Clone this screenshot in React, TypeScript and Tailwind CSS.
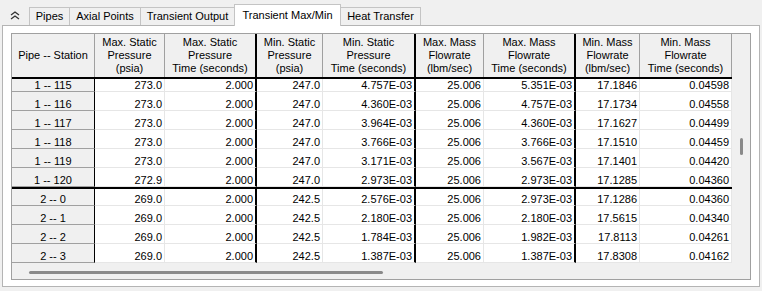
import React from "react";

const headers: string[][] = [
  ["Pipe -- Station"],
  ["Max. Static", "Pressure", "(psia)"],
  ["Max. Static", "Pressure", "Time (seconds)"],
  ["Min. Static", "Pressure", "(psia)"],
  ["Min. Static", "Pressure", "Time (seconds)"],
  ["Max. Mass", "Flowrate", "(lbm/sec)"],
  ["Max. Mass", "Flowrate", "Time (seconds)"],
  ["Min. Mass", "Flowrate", "(lbm/sec)"],
  ["Min. Mass", "Flowrate", "Time (seconds)"],
];

const widths = [
  "w-[83px]",
  "w-[70px]",
  "w-[92px]",
  "w-[66px]",
  "w-[93px]",
  "w-[68px]",
  "w-[92px]",
  "w-[64px]",
  "w-[92px]",
];

const thick = [false, false, true, false, true, false, true, false, false];

const rows: string[][] = [
  ["1 -- 115", "273.0", "2.000", "247.0", "4.757E-03", "25.006", "5.351E-03", "17.1846", "0.04598"],
  ["1 -- 116", "273.0", "2.000", "247.0", "4.360E-03", "25.006", "4.757E-03", "17.1734", "0.04558"],
  ["1 -- 117", "273.0", "2.000", "247.0", "3.964E-03", "25.006", "4.360E-03", "17.1627", "0.04499"],
  ["1 -- 118", "273.0", "2.000", "247.0", "3.766E-03", "25.006", "3.766E-03", "17.1510", "0.04459"],
  ["1 -- 119", "273.0", "2.000", "247.0", "3.171E-03", "25.006", "3.567E-03", "17.1401", "0.04420"],
  ["1 -- 120", "272.9", "2.000", "247.0", "2.973E-03", "25.006", "2.973E-03", "17.1285", "0.04360"],
  ["2 -- 0", "269.0", "2.000", "242.5", "2.576E-03", "25.006", "2.973E-03", "17.1286", "0.04360"],
  ["2 -- 1", "269.0", "2.000", "242.5", "2.180E-03", "25.006", "2.180E-03", "17.5615", "0.04340"],
  ["2 -- 2", "269.0", "2.000", "242.5", "1.784E-03", "25.006", "1.982E-03", "17.8113", "0.04261"],
  ["2 -- 3", "269.0", "2.000", "242.5", "1.387E-03", "25.006", "1.387E-03", "17.8308", "0.04162"],
];

function Chevrons() {
  return (
    <svg width="10" height="9" viewBox="0 0 10 9" fill="none">
      <polyline points="1,4 5,1 9,4" stroke="#333" strokeWidth="1.3" />
      <polyline points="1,8 5,5 9,8" stroke="#333" strokeWidth="1.3" />
    </svg>
  );
}

export default function App() {
  return (
    <div className="w-[762px] h-[291px] bg-[#f0f0f0] overflow-hidden font-['Liberation_Sans',Arial,sans-serif] text-[11px] text-black">
      {/* Tab strip */}
      <div className="flex items-end h-[25px]">
        <div className="w-[29px] h-[25px] flex items-center justify-center pl-[1px] pt-[5px]">
          <Chevrons />
        </div>
        <div className="w-[40px] h-[18px] border-t border-l border-[#c4c4c4] bg-[#f0f0f0] flex items-center justify-center">
          Pipes
        </div>
        <div className="w-[71px] h-[18px] border-t border-l border-[#c4c4c4] bg-[#f0f0f0] flex items-center justify-center">
          Axial Points
        </div>
        <div className="w-[94px] h-[18px] border-t border-l border-[#c4c4c4] bg-[#f0f0f0] flex items-center justify-center">
          Transient Output
        </div>
        <div className="relative z-10 -mb-[1px] w-[107px] h-[22px] border-t border-l border-r border-[#c4c4c4] bg-white flex items-center justify-center pb-[1px]">
          Transient Max/Min
        </div>
        <div className="w-[80px] h-[18px] border-t border-r border-[#c4c4c4] bg-[#f0f0f0] flex items-center justify-center">
          Heat Transfer
        </div>
      </div>

      {/* Panel */}
      <div className="ml-[2px] w-[758px] h-[262px] border border-[#b4b4b4] bg-white pl-[8px] pt-[7px] pr-[8px] pb-[6px]">
        <div className="w-[740px] h-[247px] border border-[#a0a0a0] bg-[#f0f0f0] flex flex-col">
          <div className="flex h-[229px]">
            <div className="w-[720px] flex flex-col">
              {/* Header */}
              <div className="flex h-[45px] border-b-2 border-black bg-[#f0f0f0]">
                {headers.map((lines, i) => (
                  <div
                    key={i}
                    className={`${widths[i]} h-full flex flex-col items-center justify-center text-center leading-[13px] ${
                      thick[i] ? "border-r-2 border-black" : "border-r border-[#a0a0a0]"
                    }`}
                  >
                    {lines.map((l, j) => (
                      <div key={j} className="whitespace-nowrap">
                        {l}
                      </div>
                    ))}
                  </div>
                ))}
              </div>
              {/* Body */}
              <div className="h-[184px] overflow-hidden bg-white">
                <div className="-mt-[6px]">
                  {rows.map((r, ri) => (
                    <div
                      key={ri}
                      className={`flex h-[19px] ${ri === 6 ? "border-t-2 border-black" : ""}`}
                    >
                      {r.map((v, ci) => {
                        const base = `${widths[ci]} h-full whitespace-nowrap border-b flex ${
                          ri === 6 ? "pt-[4px]" : "pt-[6px]"
                        }`;
                        if (ci === 0) {
                          return (
                            <div
                              key={ci}
                              className={`${base} justify-center bg-[#f0f0f0] border-r border-b-[#a0a0a0] border-r-black leading-[12px]`}
                            >
                              {v}
                            </div>
                          );
                        }
                        return (
                          <div
                            key={ci}
                            className={`${base} justify-end pr-[2px] leading-[12px] border-b-[#e6e6e6] ${
                              thick[ci] ? "border-r-2 border-r-black" : "border-r border-r-[#e6e6e6]"
                            }`}
                          >
                            {v}
                          </div>
                        );
                      })}
                    </div>
                  ))}
                </div>
              </div>
            </div>
            {/* Vertical scrollbar */}
            <div className="w-[18px] pl-[8px] pt-[104px]">
              <div className="w-[3px] h-[17px] rounded-full bg-[#8a8a8a]" />
            </div>
          </div>
          {/* Horizontal scrollbar */}
          <div className="h-[16px] pl-[17px] pt-[8px]">
            <div className="w-[354px] h-[3px] rounded-full bg-[#8a8a8a]" />
          </div>
        </div>
      </div>
    </div>
  );
}
